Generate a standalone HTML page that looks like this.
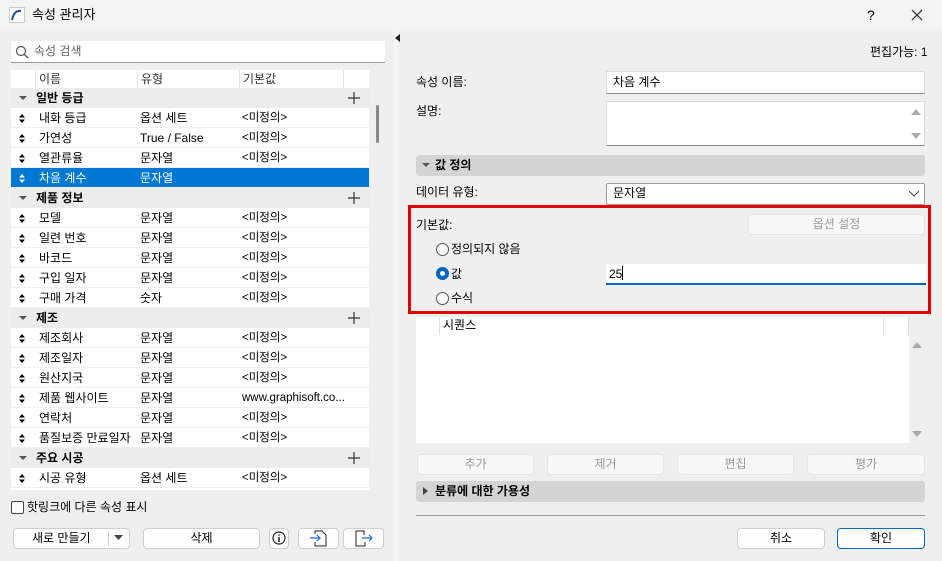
<!DOCTYPE html>
<html><head><meta charset="utf-8"><style>
*{box-sizing:border-box;margin:0;padding:0}
body{width:942px;height:561px;overflow:hidden;background:#efefef;font-family:"Liberation Sans","Noto Sans CJK KR",sans-serif;font-size:12px;color:#000;position:relative}
.a{position:absolute}
.t{position:absolute;white-space:nowrap;line-height:20px}
.row{position:absolute;left:11px;width:358px;height:20px;background:#fff;border-bottom:1px solid #f0f0f0}
.grp{position:absolute;left:11px;width:358px;height:20px;background:#ececec;font-weight:bold}
.btn{position:absolute;height:21px;background:#fdfdfd;border:1px solid #cfcfcf;border-radius:4px;text-align:center;line-height:19px}
.dis{background:#f8f8f8;border-color:#e6e6e6;color:#999}
.inp{position:absolute;background:#fff;border:1px solid #ddd;border-bottom:1px solid #888}
.sec{position:absolute;left:416px;width:509px;height:21px;background:#d4d4d4;border-radius:3px;font-weight:bold;line-height:21px}
.rad{position:absolute;width:13px;height:13px;border:1px solid #555;border-radius:50%;background:#fff}
</style></head><body>
<!-- title bar -->
<div class="a" style="left:0;top:0;width:942px;height:31px;background:#f3f3f3"></div>
<svg class="a" style="left:9px;top:7px" width="16" height="16"><rect x="0.5" y="0.5" width="15" height="15" fill="#fff" stroke="#ccc"/><path d="M3 13 Q5 3 12 4" stroke="#1b4f9c" stroke-width="2" fill="none"/></svg>
<div class="t" style="left:32px;top:5px;font-size:13px">속성 관리자</div>
<div class="t" style="left:867px;top:5px;font-size:14px">?</div>
<svg class="a" style="left:911px;top:9px" width="12" height="12"><path d="M1 1L11 11M11 1L1 11" stroke="#222" stroke-width="1.2"/></svg>

<!-- search -->
<div class="a" style="left:11px;top:41px;width:374px;height:22px;background:#fff;border-bottom:1px solid #999"></div>
<svg class="a" style="left:15px;top:45px" width="14" height="14"><circle cx="6" cy="6" r="4.5" stroke="#555" fill="none" stroke-width="1.2"/><path d="M9.5 9.5L13 13" stroke="#555" stroke-width="1.3"/></svg>
<div class="t" style="left:34px;top:41px;color:#666">속성 검색</div>

<!-- list header -->
<div class="a" style="left:11px;top:70px;width:358px;height:19px;background:#fff"></div>
<div class="a" style="left:35px;top:70px;width:1px;height:19px;background:#e5e5e5"></div>
<div class="a" style="left:137px;top:70px;width:1px;height:19px;background:#e5e5e5"></div>
<div class="a" style="left:239px;top:70px;width:1px;height:19px;background:#e5e5e5"></div>
<div class="a" style="left:343px;top:70px;width:1px;height:19px;background:#e5e5e5"></div>
<div class="t" style="left:39px;top:69px;color:#333">이름</div>
<div class="t" style="left:141px;top:69px;color:#333">유형</div>
<div class="t" style="left:243px;top:69px;color:#333">기본값</div>
<div class="a" style="left:11px;top:488px;width:358px;height:2px;background:#fff"></div>
<div class="a" style="left:376px;top:105px;width:3px;height:38px;background:#888;border-radius:2px"></div>

<div id="list"></div>
<script>
var d=[["g","일반 등급"],["r","내화 등급","옵션 세트","<미정의>"],["r","가연성","True / False","<미정의>"],["r","열관류율","문자열","<미정의>"],["s","차음 계수","문자열",""],["g","제품 정보"],["r","모델","문자열","<미정의>"],["r","일련 번호","문자열","<미정의>"],["r","바코드","문자열","<미정의>"],["r","구입 일자","문자열","<미정의>"],["r","구매 가격","숫자","<미정의>"],["g","제조"],["r","제조회사","문자열","<미정의>"],["r","제조일자","문자열","<미정의>"],["r","원산지국","문자열","<미정의>"],["r","제품 웹사이트","문자열","www.graphisoft.co..."],["r","연락처","문자열","<미정의>"],["r","품질보증 만료일자","문자열","<미정의>"],["g","주요 시공"],["r","시공 유형","옵션 세트","<미정의>"]];
var h="";
d.forEach(function(r,i){var y=88+i*20;
if(r[0]=="g"){h+='<div class="grp" style="top:'+y+'px"></div><svg class="a" style="left:19px;top:'+(y+8)+'px" width="8" height="5"><path d="M0 0H8L4 4Z" fill="#555"/></svg><div class="t" style="left:36px;top:'+y+'px;font-weight:bold">'+r[1]+'</div><svg class="a" style="left:348px;top:'+(y+4)+'px" width="12" height="12"><path d="M6 0V12M0 6H12" stroke="#333" stroke-width="1.2"/></svg>';}
else{var s=r[0]=="s";var c=s?"#fff":"#000";
h+='<div class="row" style="top:'+y+'px;'+(s?'background:#0078d4;':'')+'"></div><svg class="a" style="left:19px;top:'+(y+6)+'px" width="6" height="9"><path d="M0 3.5L3 0L6 3.5ZM0 5.5L3 9L6 5.5Z" fill="'+c+'"/></svg><div class="t" style="left:39px;top:'+y+'px;color:'+c+'">'+r[1].replace(/</g,"&lt;")+'</div><div class="t" style="left:140px;top:'+y+'px;color:'+c+'">'+r[2]+'</div><div class="t" style="left:242px;top:'+y+'px;color:'+c+';font-size:11.5px">'+r[3].replace(/</g,"&lt;").replace(/>/g,"&gt;")+'</div>';}
});
document.getElementById("list").innerHTML=h;
</script>

<!-- checkbox -->
<div class="a" style="left:11px;top:501px;width:13px;height:13px;border:1px solid #444;border-radius:2px;background:#fff"></div>
<div class="t" style="left:27px;top:497px">핫링크에 다른 속성 표시</div>

<!-- bottom buttons left -->
<div class="btn" style="left:13px;top:528px;width:117px;text-align:left;padding-left:18px">새로 만들기</div>
<div class="a" style="left:108px;top:531px;width:1px;height:15px;background:#ccc"></div>
<svg class="a" style="left:114px;top:535px" width="9" height="5"><path d="M0 0H9L4.5 5Z" fill="#444"/></svg>
<div class="btn" style="left:143px;top:528px;width:117px">삭제</div>
<div class="btn" style="left:269px;top:528px;width:20px"></div>
<svg class="a" style="left:272px;top:531px" width="14" height="14"><circle cx="7" cy="7" r="6" stroke="#222" fill="none" stroke-width="1.2"/><path d="M7 6V11M7 3.5V4.8" stroke="#222" stroke-width="1.5"/></svg>
<div class="btn" style="left:298px;top:528px;width:41px"></div>
<svg class="a" style="left:309px;top:530px" width="20" height="17"><path d="M6 4V1H13L17 5V16H6V12" stroke="#222" fill="none"/><path d="M1 8H11M8 5L11 8L8 11" stroke="#1e6fd9" fill="none" stroke-width="1.2"/></svg>
<div class="btn" style="left:343px;top:528px;width:41px"></div>
<svg class="a" style="left:353px;top:530px" width="20" height="17"><path d="M11 5V1H3V16H12V12" stroke="#222" fill="none"/><path d="M9 8H19M16 5L19 8L16 11" stroke="#1e6fd9" fill="none" stroke-width="1.2"/></svg>

<!-- divider -->
<div class="a" style="left:394px;top:31px;width:4px;height:530px;background:#f5f5f5"></div>
<svg class="a" style="left:395px;top:34px" width="5" height="8"><path d="M5 0V8L0 4Z" fill="#222"/></svg>

<!-- right -->
<div class="t" style="left:870px;top:42px">편집가능: 1</div>
<div class="t" style="left:416px;top:72px">속성 이름:</div>
<div class="inp" style="left:606px;top:71px;width:319px;height:23px"></div>
<div class="t" style="left:613px;top:72px">차음 계수</div>
<div class="t" style="left:416px;top:101px">설명:</div>
<div class="inp" style="left:606px;top:101px;width:319px;height:45px"></div>
<svg class="a" style="left:911px;top:108px" width="10" height="34"><path d="M0 7L5 1L10 7Z M0 25H10L5 31Z" fill="#aaa"/></svg>

<div class="sec" style="top:155px"></div>
<svg class="a" style="left:422px;top:163px" width="8" height="5"><path d="M0 0H8L4 4Z" fill="#555"/></svg>
<div class="t" style="left:435px;top:155px;font-weight:bold">값 정의</div>

<div class="t" style="left:416px;top:182px">데이터 유형:</div>
<div class="a" style="left:606px;top:183px;width:319px;height:22px;background:#fff;border:1px solid #999;border-radius:2px"></div>
<div class="t" style="left:613px;top:183px">문자열</div>
<svg class="a" style="left:909px;top:191px" width="10" height="6"><path d="M0 0L5 5L10 0" stroke="#444" fill="none"/></svg>

<div class="a" style="left:408px;top:205px;width:523px;height:109px;border:3px solid #e00000"></div>
<div class="t" style="left:416px;top:215px">기본값:</div>
<div class="btn dis" style="left:748px;top:214px;width:177px">옵션 설정</div>
<div class="rad" style="left:436px;top:243px"></div>
<div class="t" style="left:451px;top:239px">정의되지 않음</div>
<div class="rad" style="left:436px;top:267px;border:4px solid #0067c0"></div>
<div class="t" style="left:451px;top:264px">값</div>
<div class="a" style="left:606px;top:264px;width:320px;height:21px;background:#fff;border-bottom:2px solid #0067c0"></div>
<div class="t" style="left:609px;top:264px">25<span style="display:inline-block;width:1px;height:14px;background:#000;vertical-align:-2px"></span></div>
<div class="rad" style="left:436px;top:292px"></div>
<div class="t" style="left:451px;top:288px">수식</div>

<div class="a" style="left:416px;top:317px;width:493px;height:126px;background:#fff"></div>
<div class="a" style="left:439px;top:317px;width:1px;height:18px;background:#e0e0e0"></div>
<div class="a" style="left:883px;top:317px;width:1px;height:18px;background:#e0e0e0"></div>
<div class="a" style="left:908px;top:317px;width:1px;height:18px;background:#e0e0e0"></div>
<div class="t" style="left:443px;top:315px">시퀀스</div>
<svg class="a" style="left:912px;top:341px" width="10" height="98"><path d="M0 7L5 1L10 7Z M0 90H10L5 96Z" fill="#aaa"/></svg>

<div class="btn dis" style="left:417px;top:454px;width:117px">추가</div>
<div class="btn dis" style="left:547px;top:454px;width:117px">제거</div>
<div class="btn dis" style="left:677px;top:454px;width:117px">편집</div>
<div class="btn dis" style="left:807px;top:454px;width:118px">평가</div>

<div class="sec" style="top:481px"></div>
<svg class="a" style="left:423px;top:487px" width="5" height="8"><path d="M0 0L5 4L0 8Z" fill="#444"/></svg>
<div class="t" style="left:435px;top:481px;font-weight:bold">분류에 대한 가용성</div>
<div class="a" style="left:416px;top:515px;width:509px;height:1px;background:#999"></div>
<div class="btn" style="left:737px;top:528px;width:88px">취소</div>
<div class="btn" style="left:837px;top:528px;width:88px;border:1px solid #0067c0">확인</div>
</body></html>
